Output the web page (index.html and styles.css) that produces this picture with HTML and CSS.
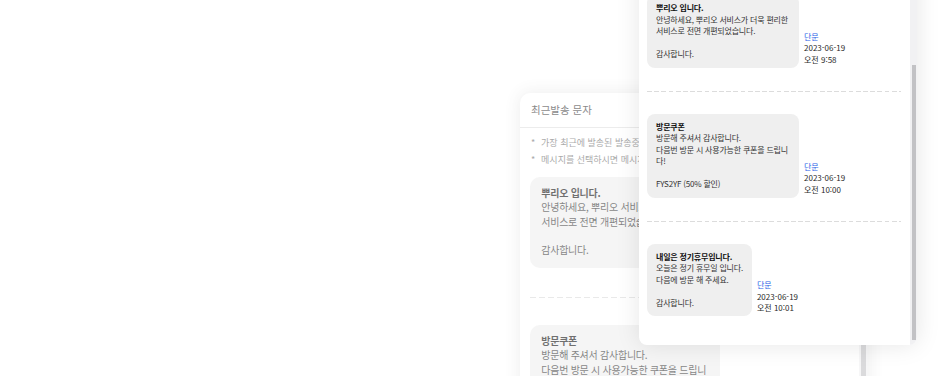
FILE: index.html
```html
<!DOCTYPE html>
<html lang="ko">
<head>
<meta charset="utf-8">
<title>최근발송 문자</title>
<link rel="stylesheet" href="styles.css">
</head>
<body>
<div class="stage">
  <section class="card card--back">
    <header class="card-head"><span class="card-title">최근발송 문자</span></header>
    <ul class="notes">
      <li>가장 최근에 발송된 발송중인 문자 5건이 표시됩니다.</li>
      <li>메시지를 선택하시면 메시지 내용이 입력됩니다.</li>
    </ul>
    <div class="list">
      <div class="item item--first">
        <div class="bubble"><strong class="bubble-title">뿌리오 입니다.</strong><p class="bubble-body">안녕하세요, 뿌리오 서비스가 더욱 편리한 서비스로 전면 개편되었습니다.<br><br>감사합니다.</p></div>
        <div class="meta"><span class="meta-type">단문</span><span>2023-06-19</span><span>오전 9:58</span></div>
      </div>
      <div class="item">
        <div class="bubble"><strong class="bubble-title">방문쿠폰</strong><p class="bubble-body">방문해 주셔서 감사합니다.<br>다음번 방문 시 사용가능한 쿠폰을 드립니다!<br><br>FYS2YF (50% 할인)</p></div>
        <div class="meta"><span class="meta-type">단문</span><span>2023-06-19</span><span>오전 10:00</span></div>
      </div>
    </div>
    <div class="scroll"><div class="scroll-thumb"></div></div>
  </section>

  <section class="card card--front">
    <div class="list">
      <div class="item">
        <div class="bubble"><strong class="bubble-title">뿌리오 입니다.</strong><p class="bubble-body">안녕하세요, 뿌리오 서비스가 더욱 편리한 서비스로 전면 개편되었습니다.<br><br>감사합니다.</p></div>
        <div class="meta"><span class="meta-type">단문</span><span>2023-06-19</span><span>오전 9:58</span></div>
      </div>
      <div class="item">
        <div class="bubble"><strong class="bubble-title">방문쿠폰</strong><p class="bubble-body">방문해 주셔서 감사합니다.<br>다음번 방문 시 사용가능한 쿠폰을 드립니다!<br><br>FYS2YF (50% 할인)</p></div>
        <div class="meta"><span class="meta-type">단문</span><span>2023-06-19</span><span>오전 10:00</span></div>
      </div>
      <div class="item">
        <div class="bubble"><strong class="bubble-title">내일은 정기휴무입니다.</strong><p class="bubble-body">오늘은 정기 휴무일 입니다.<br>다음에 방문 해 주세요.<br><br>감사합니다.</p></div>
        <div class="meta"><span class="meta-type">단문</span><span>2023-06-19</span><span>오전 10:01</span></div>
      </div>
    </div>
    <div class="scroll"><div class="scroll-thumb"></div></div>
  </section>
</div>
</body>
</html>
```

FILE: styles.css
```css
* {
  box-sizing: border-box;
  margin: 0;
  padding: 0;
}

html, body {
  width: 100%;
  height: 100%;
}

body {
  background: #ffffff;
  font-family: "Noto Sans CJK KR", "Noto Sans", sans-serif;
  overflow: hidden;
}

.stage {
  position: relative;
  width: 940px;
  height: 376px;
  overflow: hidden;
}

.card {
  position: absolute;
  width: 34.75em;
  background: #ffffff;
  border-radius: 1em;
  overflow: hidden;
  color: #333333;
  line-height: 1.4375;
}

.card--front {
  font-size: 8px;
  left: 639px;
  top: -28px;
  height: 373px;
  box-shadow: 0 0 24px rgba(0, 0, 0, 0.10);
  z-index: 2;
}

.card--back {
  font-size: 10px;
  left: 520px;
  top: 93px;
  height: 420px;
  opacity: 0.6;
  box-shadow: 0 0 16px rgba(0, 0, 0, 0.12);
  z-index: 1;
}

.card-head {
  height: 3.5em;
  padding-left: 1.1em;
  display: flex;
  align-items: center;
  border-bottom: 1px solid #e0e0e0;
}

.card-title {
  font-size: 1.05em;
  color: #3a3a3a;
}

.notes {
  list-style: none;
  padding: 0.55em 1.1em 0;
}

.notes li {
  display: flex;
  font-size: 0.9em;
  line-height: 1.9;
  color: #707070;
  white-space: nowrap;
}

.notes li::before {
  content: "*";
  width: 1.12em;
  flex: none;
}

.list {
  padding: 0 2em 0 1em;
}

.item {
  display: flex;
  align-items: flex-end;
  gap: 0.625em;
  padding: 2.875em 0;
}

.item + .item {
  background: repeating-linear-gradient(90deg, #dcdcdc 0 0.6em, transparent 0.6em 0.9em) top left / 100% 1px no-repeat;
}

.item--first {
  padding-top: 0.95em;
}

.bubble {
  background: #efefef;
  border-radius: 1em;
  padding: 0.875em 1.125em 1em;
  max-width: 19em;
  letter-spacing: -0.025em;
}

.bubble-title {
  display: block;
  font-weight: 700;
  color: #111111;
}

.bubble-body {
  color: #333333;
}

.meta {
  display: flex;
  flex-direction: column;
  margin-bottom: 0.28em;
  color: #2a2a2a;
  white-space: nowrap;
}

.meta-type {
  color: #1f5fe6;
}

.scroll {
  position: absolute;
  top: 0;
  right: 0;
  bottom: 0;
  width: 0.875em;
  background: #f1f1f3;
}

.scroll-thumb {
  position: absolute;
  left: 0.25em;
  right: 0.15em;
  top: 11.625em;
  bottom: 0.625em;
  background: #c2c2c5;
}
```
